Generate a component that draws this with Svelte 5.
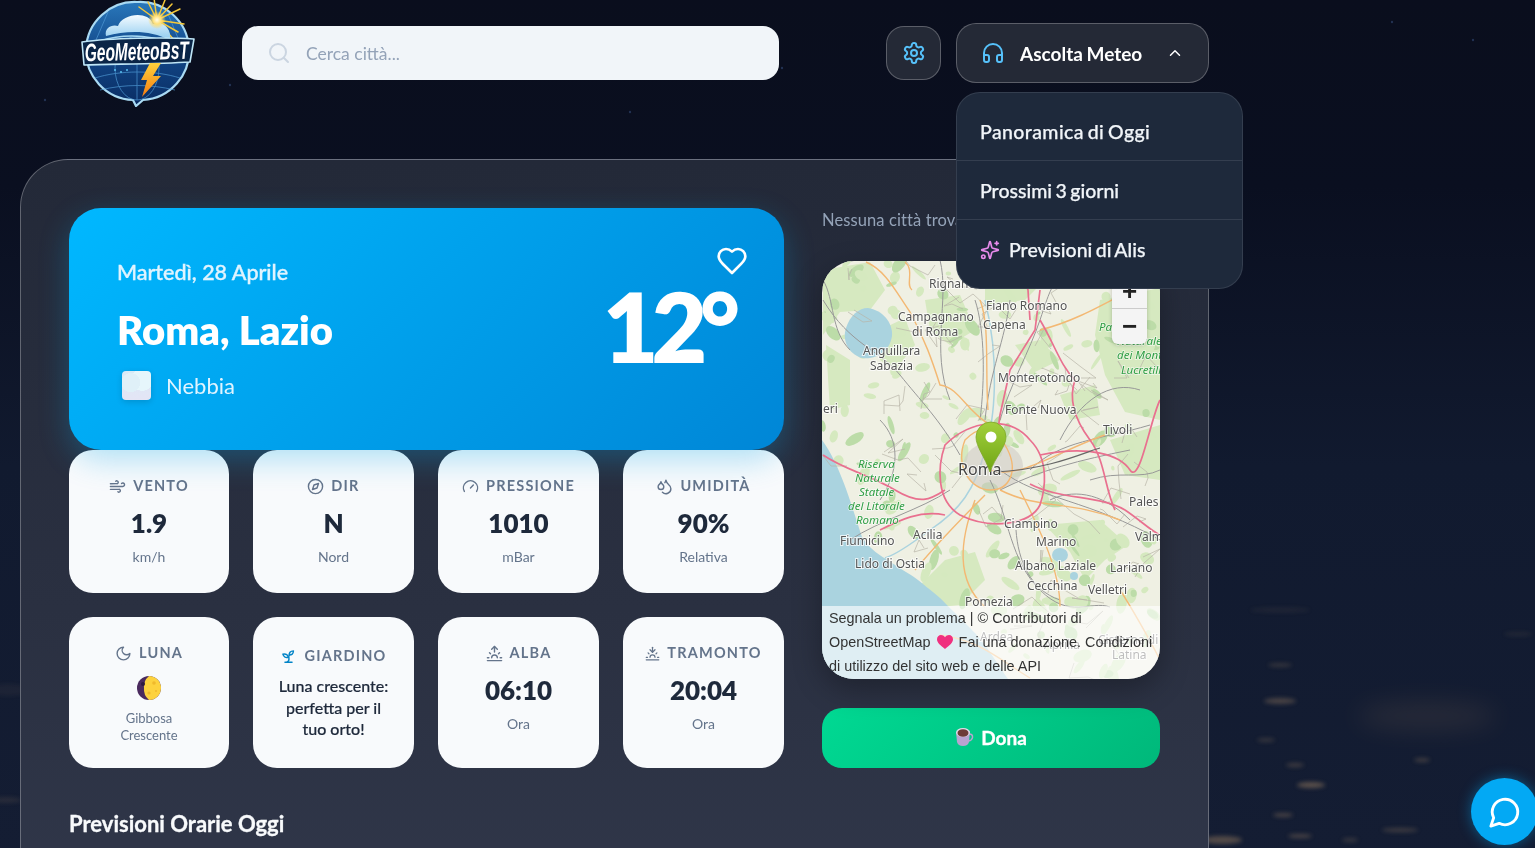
<script>
  const ic = {
    search: ['M11 3a8 8 0 1 0 0 16a8 8 0 1 0 0-16', 'm21 21-4.3-4.3'],
    settings: ['M12.22 2h-.44a2 2 0 0 0-2 2v.18a2 2 0 0 1-1 1.73l-.43.25a2 2 0 0 1-2 0l-.15-.08a2 2 0 0 0-2.73.73l-.22.38a2 2 0 0 0 .73 2.73l.15.1a2 2 0 0 1 1 1.72v.51a2 2 0 0 1-1 1.74l-.15.09a2 2 0 0 0-.73 2.73l.22.38a2 2 0 0 0 2.73.73l.15-.08a2 2 0 0 1 2 0l.43.25a2 2 0 0 1 1 1.73V20a2 2 0 0 0 2 2h.44a2 2 0 0 0 2-2v-.18a2 2 0 0 1 1-1.73l.43-.25a2 2 0 0 1 2 0l.15.08a2 2 0 0 0 2.73-.73l.22-.39a2 2 0 0 0-.73-2.73l-.15-.08a2 2 0 0 1-1-1.74v-.5a2 2 0 0 1 1-1.74l.15-.09a2 2 0 0 0 .73-2.73l-.22-.38a2 2 0 0 0-2.73-.73l-.15.08a2 2 0 0 1-2 0l-.43-.25a2 2 0 0 1-1-1.73V4a2 2 0 0 0-2-2z', 'M12 9a3 3 0 1 0 0 6a3 3 0 1 0 0-6'],
    headphones: ['M3 14h3a2 2 0 0 1 2 2v3a2 2 0 0 1-2 2H5a2 2 0 0 1-2-2v-7a9 9 0 0 1 18 0v7a2 2 0 0 1-2 2h-1a2 2 0 0 1-2-2v-3a2 2 0 0 1 2-2h3'],
    chevron: ['m18 15-6-6-6 6'],
    sparkles: ['M9.937 15.5A2 2 0 0 0 8.5 14.063l-6.135-1.582a.5.5 0 0 1 0-.962L8.5 9.936A2 2 0 0 0 9.937 8.5l1.582-6.135a.5.5 0 0 1 .963 0L14.063 8.5A2 2 0 0 0 15.5 9.937l6.135 1.581a.5.5 0 0 1 0 .964L15.5 14.063a2 2 0 0 0-1.437 1.437l-1.582 6.135a.5.5 0 0 1-.963 0z', 'M20 2v4', 'M22 4h-4', 'M4 18a2 2 0 1 0 0 4a2 2 0 1 0 0-4'],
    heart: ['M19 14c1.49-1.46 3-3.21 3-5.5A5.5 5.5 0 0 0 16.5 3c-1.76 0-3 .5-4.5 2-1.5-1.5-2.74-2-4.5-2A5.5 5.5 0 0 0 2 8.5c0 2.3 1.5 4.05 3 5.5l7 7Z'],
    wind: ['M17.7 7.7a2.5 2.5 0 1 1 1.8 4.3H2', 'M9.6 4.6A2 2 0 1 1 11 8H2', 'M12.6 19.4A2 2 0 1 0 14 16H2'],
    compass: ['m16.24 7.76-2.12 6.36-6.36 2.12 2.12-6.36 6.36-2.12z', 'M12 2a10 10 0 1 0 0 20a10 10 0 1 0 0-20'],
    gauge: ['m12 14 4-4', 'M3.34 19a10 10 0 1 1 17.32 0'],
    droplets: ['M7 16.3c2.2 0 4-1.83 4-4.05 0-1.16-.57-2.26-1.71-3.19S7.29 6.75 7 5.3c-.29 1.45-1.14 2.84-2.29 3.76S3 11.1 3 12.25c0 2.22 1.8 4.05 4 4.05z', 'M12.56 6.6A10.97 10.97 0 0 0 14 3.02c.5 2.5 2 4.9 4 6.5s3 3.5 3 5.5a6.98 6.98 0 0 1-11.91 4.97'],
    moon: ['M12 3a6 6 0 0 0 9 9 9 9 0 1 1-9-9Z'],
    sprout: ['M7 20h10', 'M10 20c5.5-2.5.8-6.4 3-10', 'M9.5 9.4c1.1.8 1.8 2.2 2.3 3.7-2 .4-3.5.4-4.8-.3-1.2-.6-2.3-1.9-3-4.2 2.8-.5 4.4 0 5.5.8z', 'M14.1 6a7 7 0 0 0-1.1 4c1.9-.1 3.3-.6 4.3-1.4 1-1 1.6-2.3 1.7-4.6-2.7.1-4 1-4.9 2z'],
    sunrise: ['M12 2v8', 'm4.93 10.93 1.41 1.41', 'M2 18h2', 'M20 18h2', 'm19.07 10.93-1.41 1.41', 'M22 22H2', 'm8 6 4-4 4 4', 'M16 18a4 4 0 0 0-8 0'],
    sunset: ['M12 10V2', 'm4.93 10.93 1.41 1.41', 'M2 18h2', 'M20 18h2', 'm19.07 10.93-1.41 1.41', 'M22 22H2', 'm16 6-4 4-4-4', 'M16 18a4 4 0 0 0-8 0'],
    chat: ['M7.9 20A9 9 0 1 0 4 16.1L2 22Z']
  };

  const topTiles = [
    { icon: 'wind', label: 'Vento', value: '1.9', sub: 'km/h' },
    { icon: 'compass', label: 'Dir', value: 'N', sub: 'Nord' },
    { icon: 'gauge', label: 'Pressione', value: '1010', sub: 'mBar' },
    { icon: 'droplets', label: 'Umidità', value: '90%', sub: 'Relativa' }
  ];

  // city lights on the night background
  const lights = [
    [1280, 610, 30, 3, .07], [1280, 665, 12, 2, .2], [1280, 701, 16, 3, .3],
    [1266, 740, 9, 2, .2], [1295, 765, 9, 2, .25], [1311, 785, 14, 3, .4], [1283, 815, 10, 2, .3],
    [1222, 840, 20, 4, .35], [1400, 830, 18, 2, .25], [1300, 836, 12, 2, .3], [1422, 760, 8, 2, .25],
    [1518, 634, 14, 2, .1], [8, 690, 20, 6, .06], [6, 800, 16, 3, .12], [1350, 840, 8, 2, .2]
  ];
  const stars = [[782, 68], [1473, 40], [1392, 22], [230, 85], [630, 112], [370, 60], [45, 100]];

  // scattered woods and minor roads for the map tiles
  let seed = 7;
  const rnd = () => (seed = (seed * 16807) % 2147483647) / 2147483647;
  const coast = (y) => (y < 440 ? 0 : y < 537 ? 822 + (y - 440) * 0.41 : 862 + (y - 537) * 1.3);
  const blobs = [];
  while (blobs.length < 240) {
    const x = 822 + rnd() * 338, y = 261 + rnd() * 418;
    const rx = 2 + rnd() * 9, ry = 1.5 + rnd() * 5, a = rnd() * 180;
    if (x > coast(y) + 6) blobs.push({ x, y, rx, ry, a, dark: rnd() > .7 });
  }
  const minor = [];
  while (minor.length < 70) {
    let x = 822 + rnd() * 338, y = 261 + rnd() * 418;
    if (x < coast(y) + 6) continue;
    let d = `M${x.toFixed(0)} ${y.toFixed(0)}`;
    for (let i = 0; i < 3; i++) {
      x += rnd() * 40 - 20; y += rnd() * 36 - 18;
      d += ` L${x.toFixed(0)} ${y.toFixed(0)}`;
    }
    minor.push(d);
  }

  const greens = [
    'M823 270 L870 262 L885 290 L870 310 L840 312 L823 335Z',
    'M880 330 L905 318 L915 345 L895 370 L880 360Z',
    'M925 300 L960 295 L975 330 L950 345 L930 330Z',
    'M1100 300 L1160 288 L1160 420 L1125 412 L1105 375 L1095 335Z',
    'M1015 345 L1040 340 L1060 360 L1035 372Z',
    'M1060 395 L1095 385 L1100 415 L1070 420Z',
    'M1110 440 L1160 425 L1160 480 L1125 475Z',
    'M1045 525 L1100 520 L1128 545 L1105 560 L1085 580 L1070 552Z',
    'M915 590 L945 560 L975 552 L985 580 L960 605 L940 607Z',
    'M826 345 L850 360 L850 405 L830 410Z',
    'M985 280 L1040 285 L1025 300 L985 305Z'
  ];
  const grays = [
    'M823 300 C850 345 880 350 900 375 S940 420 960 455', 'M1000 420 C1010 385 1030 350 1040 320 S1050 290 1060 275',
    'M1030 470 C1060 440 1100 440 1150 425', 'M1000 490 C1040 470 1080 460 1130 450', 'M990 480 C1010 520 1010 560 1040 590 S1090 600 1110 607',
    'M1000 470 C1040 500 1090 500 1160 540', 'M950 490 C920 510 880 520 850 540', 'M823 280 C835 300 830 330 850 350',
    'M1010 300 C1005 340 990 370 985 420', 'M975 300 C985 330 985 380 980 420', 'M1050 500 C1070 490 1100 490 1130 520',
    'M1016 530 C1018 560 1030 590 1060 600', 'M880 420 C900 440 900 470 880 500', 'M1060 440 C1080 400 1110 380 1140 390',
    'M940 260 C950 300 930 350 950 400', 'M1090 480 C1120 470 1140 480 1160 470'
  ];
  const oranges = [
    'M866 262 C885 270 895 290 910 312 C925 340 932 360 940 385 C960 388 965 410 990 425',
    'M905 262 C915 270 905 285 912 290', 'M980 300 C990 325 985 370 988 410', 'M990 470 C1020 480 1060 450 1105 435',
    'M1000 490 C1040 510 1070 500 1120 520', 'M975 500 C960 540 955 580 985 607', 'M1020 490 C1040 530 1060 570 1060 607',
    'M1040 330 C1080 320 1110 300 1150 280', 'M915 570 C940 540 960 520 985 495', 'M1120 590 C1130 605 1150 640 1160 660',
    'M940 635 C980 640 1000 660 1030 678', 'M965 440 C955 465 970 490 990 490 S1020 470 1005 445 S975 430 965 440Z'
  ];
  const pinks = [
    'M1040 290 L1035 330 L1010 370 L1000 415 L998 430', 'M1040 320 C1055 345 1060 365 1075 380 C1068 400 1075 420 1090 440 S1105 490 1115 510',
    'M945 445 C970 420 1010 415 1030 440 C1050 460 1045 490 1040 505 C1030 525 990 530 960 515 C935 500 938 465 945 445Z',
    'M1040 455 C1090 445 1120 455 1130 470 S1150 420 1160 400', 'M1030 484 C1060 500 1100 495 1125 510 C1140 520 1150 530 1160 535',
    'M823 455 C845 470 870 475 895 490 S930 500 945 490', 'M945 515 C920 510 900 520 880 530', 'M1020 270 L1028 290 L1030 320'
  ];
  const labels = [
    ['Rignano', 929, 288], ['Fiano Romano', 986, 310], ['Campagnano', 898, 321], ['di Roma', 912, 336], ['Capena', 983, 329],
    ['Anguillara', 863, 355], ['Sabazia', 870, 370], ['Monterotondo', 998, 382], ['Fonte Nuova', 1005, 414], ['Tivoli', 1103, 434],
    ['eri', 823, 413], ['Pales', 1129, 506], ['Ciampino', 1004, 528], ['Valm', 1135, 541], ['Marino', 1036, 546],
    ['Acilia', 913, 539], ['Fiumicino', 840, 545], ['Lido di Ostia', 855, 568], ['Albano Laziale', 1015, 570], ['Lariano', 1110, 572],
    ['Cecchina', 1027, 590], ['Velletri', 1088, 594], ['Pomezia', 965, 606], ['Ardea', 980, 641], ['Aprilia', 1044, 649],
    ['Cisterna di', 1098, 644], ['Latina', 1112, 659]
  ];
  const parks = [
    ['Riserva', 858, 468], ['Naturale', 855, 482], ['Statale', 859, 496], ['del Litorale', 848, 510], ['Romano', 856, 524],
    ['Parco', 1099, 331], ['Naturale', 1117, 345], ['dei Monti', 1117, 359], ['Lucretili', 1121, 374]
  ];
</script>

{#snippet icon(name, size, cls)}
  <svg class={cls} width={size} height={size} viewBox="0 0 24 24" fill="none" stroke="currentColor" stroke-width="2" stroke-linecap="round" stroke-linejoin="round" aria-hidden="true">
    {#each ic[name] as d}<path {d} />{/each}
  </svg>
{/snippet}

<div class="sky" aria-hidden="true">
  <svg width="1535" height="848" viewBox="0 0 1535 848">
    <defs>
      <filter id="soft"><feGaussianBlur stdDeviation="2.2" /></filter>
      <filter id="softer" x="-50%" y="-100%" width="200%" height="300%"><feGaussianBlur stdDeviation="12" /></filter>
    </defs>
    {#each stars as s}<circle cx={s[0]} cy={s[1]} r="1.2" fill="#2c4268" opacity=".7" />{/each}
    <ellipse cx="1427" cy="716" rx="70" ry="14" fill="#a08060" opacity=".14" filter="url(#softer)" />
    <g filter="url(#soft)">
      {#each lights as l}<ellipse cx={l[0]} cy={l[1]} rx={l[2]} ry={l[3]} fill="#c9a070" opacity={l[4]} />{/each}
    </g>
  </svg>
</div>

<div class="page">
  <header class="top">
    <svg class="logo" width="117" height="107" viewBox="78 0 117 107" role="img" aria-label="GeoMeteoBsT">
      <defs>
        <linearGradient id="globe" x1="0" y1="0" x2="0" y2="1"><stop offset="0" stop-color="#2a78bb" /><stop offset=".45" stop-color="#124a8c" /><stop offset="1" stop-color="#0a2c62" /></linearGradient>
        <linearGradient id="bolt" x1="0" y1="0" x2="0" y2="1"><stop offset="0" stop-color="#ffd23c" /><stop offset="1" stop-color="#f57c10" /></linearGradient>
        <linearGradient id="cloud" x1="0" y1="0" x2="0" y2="1"><stop offset="0" stop-color="#f4fbff" /><stop offset="1" stop-color="#8fcbef" /></linearGradient>
        <radialGradient id="sun"><stop offset="0" stop-color="#fffde8" /><stop offset=".45" stop-color="#ffe07a" /><stop offset="1" stop-color="#ffd75a" stop-opacity="0" /></radialGradient>
      </defs>
      <path d="M137 2 a49 49 0 0 1 6 98 L136 106 L133 100 A49 49 0 0 1 137 2Z" fill="url(#globe)" stroke="#a9daf3" stroke-width="2.2" />
      <g fill="none" stroke="#4f9ad6" stroke-width=".8" opacity=".85">
        <ellipse cx="137" cy="68" rx="22" ry="32" />
        <path d="M95 78 C120 70 155 70 180 78 M100 90 C125 84 150 84 175 90 M137 62v38 M108 12 L96 40 M168 14 L178 38" />
      </g>
      <g stroke="#f5c838" stroke-width="1.5" stroke-linecap="round">
        <path d="M157 20 L139 7 M157 20 L148 2 M157 20 L154 -2 M157 20 L165 0 M157 20 L172 4 M157 20 L180 9 M157 20 L184 24 M157 20 L178 32 M157 20 L174 40" />
      </g>
      <path d="M106 36 C104 28 112 24 118 26 C122 14 148 10 153 24 C162 20 172 28 170 40 C150 30 128 30 106 36Z" fill="url(#cloud)" />
      <circle cx="157" cy="20" r="9" fill="url(#sun)" />
      <path d="M100 41 C125 33 150 35 175 44" fill="none" stroke="#a6d8f2" stroke-width="1.4" />
      <path d="M82 42 C110 38 165 37 194 39 L190 62 C160 64 110 64 84 65Z" fill="#0a2547" stroke="#bfe6f7" stroke-width="1.6" stroke-linejoin="round" />
      <text class="logotext" x="137" y="60" text-anchor="middle" textLength="104" lengthAdjust="spacingAndGlyphs" transform="rotate(-1.500 137 60)">GeoMeteoBsT</text>
      <path d="M150 63 L161 63 L153 76 L161 76 L142 97 L147 80 L141 80Z" fill="url(#bolt)" />
      <g fill="#5ac0f0"><circle cx="115" cy="70" r="1" /><circle cx="121" cy="72" r="1" /><circle cx="127" cy="70" r="1" /></g>
    </svg>

    <label class="search">
      {@render icon('search', 24, 'search-ic')}
      <input type="text" placeholder="Cerca città..." />
    </label>

    <button class="gear" type="button" aria-label="Impostazioni">{@render icon('settings', 24, 'sky-ic')}</button>

    <div class="listen">
      <button class="listen-btn" type="button">
        {@render icon('headphones', 24, 'sky-ic')}
        <span>Ascolta Meteo</span>
        {@render icon('chevron', 18, 'chev')}
      </button>
      <ul class="menu">
        <li>Panoramica di Oggi</li>
        <li>Prossimi 3 giorni</li>
        <li>{@render icon('sparkles', 20, 'spark')} Previsioni di Alis</li>
      </ul>
    </div>
  </header>

  <main class="panel">
    <section class="left">
      <div class="hero">
        <div>
          <p class="date">Martedì, 28 Aprile</p>
          <h1>Roma, Lazio</h1>
          <div class="cond">
            <span class="fog"></span>
            <span>Nebbia</span>
          </div>
        </div>
        <div class="hero-right">
          {@render icon('heart', 32, 'fav')}
          <div class="temp">12°</div>
        </div>
      </div>

      <div class="tiles">
        {#each topTiles as t}
          <div class="tile">
            <div class="lbl">{@render icon(t.icon, 17, '')}{t.label}</div>
            <div class="val">{t.value}</div>
            <div class="sub">{t.sub}</div>
          </div>
        {/each}

        <div class="tile tall">
          <div class="lbl">{@render icon('moon', 17, '')}Luna</div>
          <svg class="moon" width="24" height="24" viewBox="0 0 24 24" aria-hidden="true">
            <circle cx="12" cy="12" r="12" fill="#4a2a5e" />
            <path d="M12 0a12 12 0 0 1 0 24a14 14 0 0 1-5-12a14 14 0 0 1 5-12Z" fill="#fdd23e" />
            <circle cx="6" cy="8" r="2" fill="#2f1a40" /><circle cx="17" cy="7" r="1.8" fill="#f0b92c" /><circle cx="12" cy="17" r="1.6" fill="#f0b92c" /><circle cx="19" cy="15" r="1" fill="#f0b92c" />
          </svg>
          <div class="sub small">Gibbosa<br />Crescente</div>
        </div>
        <div class="tile tall garden">
          <div class="lbl">{@render icon('sprout', 17, 'blue')}Giardino</div>
          <p>Luna crescente: perfetta per il tuo orto!</p>
        </div>
        <div class="tile tall">
          <div class="lbl">{@render icon('sunrise', 17, '')}Alba</div>
          <div class="val">06:10</div>
          <div class="sub">Ora</div>
        </div>
        <div class="tile tall">
          <div class="lbl">{@render icon('sunset', 15, '')}Tramonto</div>
          <div class="val">20:04</div>
          <div class="sub">Ora</div>
        </div>
      </div>

      <h2>Previsioni Orarie Oggi</h2>
    </section>

    <aside class="right">
      <p class="none">Nessuna città trovata</p>
      <div class="map">
        <svg class="tiles-svg" width="338" height="418" viewBox="822 261 338 418" aria-label="Mappa di Roma">
          <defs>
            <filter id="tile"><feGaussianBlur stdDeviation=".5" /></filter>
            <linearGradient id="pin" x1="0" y1="0" x2="0" y2="1"><stop offset="0" stop-color="#a2d03c" /><stop offset="1" stop-color="#6fa514" /></linearGradient>
          </defs>
          <rect x="822" y="261" width="338" height="418" fill="#eff0e3" />
          <g filter="url(#tile)">
            <g fill="#d6e9c0">{#each greens as d}<path {d} />{/each}</g>
            {#each blobs as b}
              <ellipse cx={b.x} cy={b.y} rx={b.rx} ry={b.ry} transform="rotate({b.a} {b.x} {b.y})" fill={b.dark ? '#bcdca8' : '#d5e9bf'} />
            {/each}
            <path d="M822 440 C840 465 850 500 862 537 C870 550 880 555 892 563 C905 572 912 575 918 580 C930 590 940 597 945 603 C960 618 970 628 975 633 C990 650 998 665 1008 679 L822 679Z" fill="#aad3df" />
            <path d="M868 308 C882 310 893 322 892 336 C890 350 878 360 862 358 C848 354 842 340 846 328 C850 316 858 308 868 308Z" fill="#aad3df" />
            <ellipse cx="1060" cy="555" rx="8" ry="7" fill="#aad3df" /><ellipse cx="1074" cy="576" rx="4" ry="4" fill="#aad3df" />
            <path d="M985 300 C1000 360 995 420 985 450 C975 490 960 510 930 530 C910 545 895 555 885 558" fill="none" stroke="#aad3df" stroke-width="1.5" />
            <ellipse cx="993" cy="466" rx="30" ry="24" fill="#cfccc5" opacity=".6" />
            <g fill="none" stroke="#b8b4a8" stroke-width=".7">{#each minor as d}<path {d} />{/each}</g>
            <g fill="none" stroke="#989898" stroke-width="1">{#each grays as d}<path {d} />{/each}</g>
            <g fill="none" stroke="#f3b873" stroke-width="1.4">{#each oranges as d}<path {d} />{/each}</g>
            <g fill="none" stroke="#e9708f" stroke-width="1.7">{#each pinks as d}<path {d} />{/each}</g>
            <path d="M995 472 C1050 470 1090 450 1100 448" fill="none" stroke="#666" stroke-width="1.2" />
          </g>
          <g class="place">{#each labels as l}<text x={l[1]} y={l[2]}>{l[0]}</text>{/each}</g>
          <text class="place roma" x="958" y="475">Roma</text>
          <g class="park">{#each parks as l}<text x={l[1]} y={l[2]}>{l[0]}</text>{/each}</g>
          <path d="M990 472 C985 457 976 447 976 437 a15 15 0 0 1 30 0 C1006 447 995 457 990 472Z" fill="url(#pin)" stroke="#7da72a" stroke-width=".8" />
          <circle cx="991" cy="437" r="5.5" fill="#fff" />
        </svg>
        <div class="zoom">
          <button type="button">+</button>
          <button type="button" class="minus">−</button>
        </div>
        <div class="attr">
          Segnala un problema | © Contributori di OpenStreetMap <svg class="tinyheart" width="16" height="14" viewBox="0 0 16 14" aria-hidden="true"><path d="M8 14 C3 10 0 7.500 0 4.200 C0 1.800 1.800 0 4 0 C5.500 0 7 .8 8 2.300 C9 .8 10.500 0 12 0 C14.200 0 16 1.800 16 4.200 C16 7.500 13 10 8 14Z" fill="#f0307f" /></svg> Fai una donazione. Condizioni di utilizzo del sito web e delle API
        </div>
      </div>
      <button class="donate" type="button">
        <svg width="19" height="18" viewBox="0 0 19 18" aria-hidden="true">
          <path d="M14 6 q4 0 3.500 3.500 q-.5 3 -4 3.500" fill="none" stroke="#b9a3d0" stroke-width="1.500" />
          <path d="M1 4 L15 3 L14 14 Q13 18 8 18 Q3 18 2 14Z" fill="#b9a3d0" />
          <ellipse cx="8" cy="4.500" rx="7" ry="4.500" fill="#e0dbe8" /><ellipse cx="8" cy="5" rx="5.500" ry="3.800" fill="#6d3b36" />
        </svg>
        <span>Dona</span>
      </button>
    </aside>
  </main>
</div>

<button class="chat" type="button" aria-label="Chat">{@render icon('chat', 34, '')}</button>

<style>
  :global(html), :global(body) {
    height: 848px;
    overflow: hidden;
  }
  :global(body) {
    background: linear-gradient(180deg, #0a0e1d 0%, #0a0f20 22%, #111a2f 55%, #141d33 100%);
    font-family: "Lato", "Noto Sans", sans-serif;
  }
  .sky {
    position: absolute;
    inset: 0;
    overflow: hidden;
  }
  .page {
    position: relative;
    width: 1535px;
    height: 848px;
    overflow: hidden;
  }
  .top {
    display: flex;
    align-items: center;
    height: 106px;
    padding-left: 78px;
    margin-bottom: 53px;
  }
  .logo {
    flex: none;
  }
  .logotext {
    font-family: "Liberation Sans", sans-serif;
    font-weight: 700;
    font-style: italic;
    font-size: 25px;
    fill: #fff;
  }
  .search {
    flex: none;
    display: flex;
    align-items: center;
    gap: 13px;
    box-sizing: border-box;
    width: 537px;
    height: 54px;
    margin-left: 47px;
    padding-left: 25px;
    background: #f1f5f9;
    border-radius: 16px;
    color: #cbd5e1;
  }
  .search input {
    flex: 1;
    border: none;
    outline: none;
    background: transparent;
    font: 400 17.5px "Lato", sans-serif;
  }
  .search input::placeholder {
    color: #94a3b8;
    opacity: 1;
  }
  .gear {
    flex: none;
    display: flex;
    align-items: center;
    justify-content: center;
    width: 55px;
    height: 54px;
    margin-left: 107px;
    padding: 0;
    background: #242936;
    border: 1px solid rgba(255, 255, 255, .25);
    border-radius: 18px;
  }
  .sky-ic {
    color: #56c1fa;
  }
  .listen {
    position: relative;
    flex: none;
    margin-left: 15px;
  }
  .listen-btn {
    display: flex;
    align-items: center;
    box-sizing: border-box;
    width: 253px;
    height: 60px;
    padding: 0 0 0 24px;
    background: #242936;
    border: 1px solid rgba(255, 255, 255, .25);
    border-radius: 20px;
    color: #fff;
    font: 700 19px "Lato", sans-serif;
  }
  .listen-btn span {
    margin-left: 15px;
    width: 146px;
    text-align: left;
    white-space: nowrap;
    word-spacing: -1px;
  }
  .chev {
    color: #fff;
  }
  .menu {
    position: absolute;
    top: 69px;
    left: 0;
    z-index: 5;
    box-sizing: border-box;
    width: 287px;
    height: 197px;
    margin: 0;
    padding: 9px 0;
    list-style: none;
    background: #1e293b;
    border: 1px solid rgba(255, 255, 255, .1);
    border-radius: 24px;
    color: #f1f5f9;
    font-size: 19.5px;
    font-weight: 500;
    word-spacing: -1.5px;
    -webkit-text-stroke: .25px currentColor;
  }
  .menu li {
    display: flex;
    align-items: center;
    gap: 9px;
    box-sizing: border-box;
    height: 59px;
    padding-left: 23px;
    border-bottom: 1px solid rgba(255, 255, 255, .1);
  }
  .menu li:first-child {
    letter-spacing: .4px;
  }
  .menu li:last-child {
    border-bottom: none;
  }
  .spark {
    color: #e88bec;
    -webkit-text-stroke: 0;
  }
  .panel {
    display: grid;
    grid-template-columns: 715px 338px;
    column-gap: 38px;
    box-sizing: border-box;
    width: 1189px;
    height: 900px;
    margin-left: 20px;
    padding: 48px;
    background: linear-gradient(180deg, #232938 0%, #2a3041 50%, #333a4e 100%);
    border: 1px solid rgba(255, 255, 255, .28);
    border-radius: 48px;
  }
  .hero {
    position: relative;
    z-index: 1;
    display: flex;
    justify-content: space-between;
    box-sizing: border-box;
    height: 242px;
    padding: 48px 36px 0 48px;
    background: linear-gradient(135deg, #00b8ff 0%, #0086d6 100%);
    border-radius: 32px;
    box-shadow: 0 10px 30px rgba(14, 165, 233, .3);
    color: #fff;
  }
  .date {
    margin: 0;
    font-size: 21.5px;
    line-height: 33px;
    font-weight: 500;
    color: #e0f4ff;
    -webkit-text-stroke: .35px currentColor;
  }
  h1 {
    margin: 16px 0 0;
    font-size: 40px;
    line-height: 50px;
    font-weight: 800;
  }
  .cond {
    display: flex;
    align-items: center;
    gap: 15px;
    margin: 16px 0 0 5px;
    font-size: 22px;
    color: #e0f4ff;
  }
  .fog {
    width: 29px;
    height: 29px;
    border-radius: 4px;
    background:
      radial-gradient(circle at 30% 40%, #dff0f8 0 35%, transparent 36%),
      radial-gradient(circle at 70% 30%, #e6f6fb 0 38%, transparent 39%),
      linear-gradient(180deg, #d8eaf6, #e4e5f5);
    box-shadow: 0 2px 6px rgba(0, 0, 0, .15);
  }
  .hero-right {
    display: flex;
    flex-direction: column;
    align-items: flex-end;
  }
  .fav {
    margin-top: -11px;
  }
  .temp {
    margin-right: 15px;
    font-size: 96px;
    line-height: 98px;
    font-weight: 800;
    letter-spacing: -7px;
  }
  .tiles {
    display: grid;
    grid-template-columns: 160px 161px 161px 161px;
    grid-template-rows: 143px 151px;
    gap: 24px;
  }
  .tile {
    box-sizing: border-box;
    padding-top: 26px;
    background: #f8fafc;
    border-radius: 24px;
    text-align: center;
  }
  .lbl {
    display: flex;
    align-items: center;
    justify-content: center;
    gap: 7px;
    font-size: 14.5px;
    line-height: 20px;
    font-weight: 700;
    letter-spacing: 1.2px;
    text-transform: uppercase;
    color: #64748b;
  }
  .val {
    margin-top: 10px;
    font-size: 26px;
    line-height: 34px;
    font-weight: 800;
    color: #1e293b;
  }
  .sub {
    margin-top: 7px;
    font-size: 14px;
    line-height: 20px;
    color: #64748b;
  }
  .moon {
    display: block;
    margin: 13px auto 0;
  }
  .small {
    margin-top: 10px;
    font-size: 13px;
    line-height: 17px;
  }
  .garden {
    padding-top: 29px;
  }
  .garden p {
    margin: 9px 20px 0;
    font-size: 16px;
    line-height: 21.5px;
    font-weight: 500;
    color: #1e293b;
    -webkit-text-stroke: .2px currentColor;
  }
  .blue {
    color: #0284c7;
  }
  h2 {
    margin: 42px 0 0;
    font-size: 22px;
    line-height: 28px;
    font-weight: 700;
    color: #f8fafc;
    -webkit-text-stroke: .3px currentColor;
  }
  .none {
    margin: 0 0 29px;
    font-size: 16.5px;
    line-height: 24px;
    letter-spacing: .1px;
    color: #94a3b8;
  }
  .map {
    position: relative;
    width: 338px;
    height: 418px;
    overflow: hidden;
    border-radius: 32px;
    box-shadow: 0 10px 30px rgba(0, 0, 0, .3);
  }
  .tiles-svg {
    display: block;
  }
  .place text, .roma {
    font-family: "Noto Sans", sans-serif;
    font-size: 12px;
    fill: #555;
    stroke: rgba(255, 255, 255, .75);
    stroke-width: 2px;
    paint-order: stroke;
  }
  .roma {
    font-size: 16px;
    fill: #444;
  }
  .park text {
    font-family: "Noto Sans", sans-serif;
    font-size: 11.5px;
    font-style: italic;
    fill: #2f9e44;
    stroke: rgba(255, 255, 255, .6);
    stroke-width: 1.5px;
    paint-order: stroke;
  }
  .zoom {
    position: absolute;
    top: 13px;
    right: 13px;
    width: 35px;
    background: #f4f4f4;
    border-radius: 0 0 6px 6px;
    box-shadow: 0 1px 4px rgba(0, 0, 0, .2);
  }
  .zoom button {
    display: block;
    width: 35px;
    height: 35px;
    padding: 0;
    border: none;
    border-bottom: 1px solid #ccc;
    background: transparent;
    font: 700 26px/35px "Liberation Sans", sans-serif;
    color: #222;
  }
  .zoom .minus {
    border-bottom: none;
  }
  .attr {
    position: absolute;
    left: 0;
    right: 0;
    top: 345px;
    bottom: 0;
    padding: 0 7px;
    background: rgba(255, 255, 255, .62);
    font: 14.4px/24px "Liberation Sans", sans-serif;
    color: #333;
  }
  .tinyheart {
    vertical-align: -2px;
    margin: 0 2px;
  }
  .donate {
    display: flex;
    align-items: center;
    justify-content: center;
    gap: 7px;
    width: 338px;
    height: 60px;
    margin-top: 29px;
    padding: 0 0 2px;
    background: linear-gradient(135deg, #00d993 0%, #00b87a 100%);
    border: none;
    border-radius: 20px;
    color: #fff;
    font: 700 19px "Lato", sans-serif;
    -webkit-text-stroke: .3px currentColor;
  }
  .chat {
    position: fixed;
    left: 1471px;
    top: 778px;
    display: flex;
    align-items: center;
    justify-content: center;
    width: 67px;
    height: 67px;
    padding: 0;
    background: #03a9f4;
    border: none;
    border-radius: 50%;
    box-shadow: 0 0 14px rgba(3, 169, 244, .45);
    color: #fff;
  }
</style>
